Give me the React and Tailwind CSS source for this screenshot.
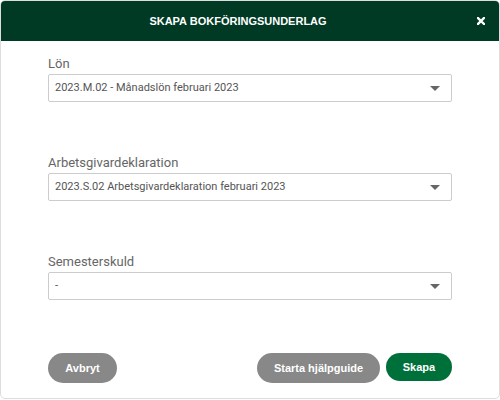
import React from "react";

const fields = [
  { label: "Lön", value: "2023.M.02 - Månadslön februari 2023" },
  { label: "Arbetsgivardeklaration", value: "2023.S.02 Arbetsgivardeklaration februari 2023" },
  { label: "Semesterskuld", value: "-" },
];

const SelectField = ({ label, value }) => (
  <div className="flex flex-col">
    <label className="h-[20px] text-[13px] leading-[16px] pt-[2px] text-[#666] font-['Roboto',sans-serif]">
      {label}
    </label>
    <div className="h-[28px] border border-[#ccc] rounded-[2px] flex items-center justify-between pl-[6px] pr-[11px] bg-white">
      <span className="text-[11px] text-[#555] font-['Roboto',sans-serif]">{value}</span>
      <svg width="10" height="5" viewBox="0 0 10 5">
        <path d="M0 0 L10 0 L5 5 Z" fill="#666" />
      </svg>
    </div>
  </div>
);

export default function App() {
  return (
    <div className="w-[500px] h-[400px] bg-white">
      <div className="w-[500px] h-[399px] border border-[#ddd] rounded-[5px] overflow-hidden flex flex-col">
        <div className="relative h-[40px] shrink-0 bg-[#013a24] flex items-center justify-center pr-[24px]">
          <span className="text-white font-bold text-[11px] font-['Liberation_Sans',sans-serif]">
            SKAPA BOKFÖRINGSUNDERLAG
          </span>
          <svg className="absolute right-[14px] top-[16px]" width="8" height="8" viewBox="0 0 8 8">
            <path d="M1 1 L7 7 M7 1 L1 7" stroke="#fff" strokeWidth="2.4" strokeLinecap="square" />
          </svg>
        </div>
        <div className="px-[47px] pt-[13px] flex flex-col gap-[51px]">
          {fields.map((f) => (
            <SelectField key={f.label} {...f} />
          ))}
        </div>
        <div className="px-[47px] mt-[53px] flex items-start">
          <button className="h-[30px] w-[69px] rounded-full bg-[#888] text-white text-[11px] font-bold font-['Liberation_Sans',sans-serif]">
            Avbryt
          </button>
          <div className="ml-auto flex items-start gap-[6px]">
            <button className="h-[30px] w-[123px] rounded-full bg-[#888] text-white text-[11px] font-bold font-['Liberation_Sans',sans-serif]">
              Starta hjälpguide
            </button>
            <button className="h-[28px] w-[66px] rounded-full bg-[#00703a] text-white text-[11px] font-bold font-['Liberation_Sans',sans-serif]">
              Skapa
            </button>
          </div>
        </div>
      </div>
    </div>
  );
}
